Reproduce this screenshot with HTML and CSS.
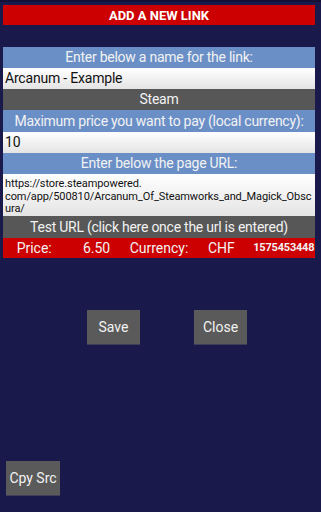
FILE: index.html
```html
<!DOCTYPE html>
<html>
<head>
<meta charset="utf-8">
<link rel="stylesheet" href="styles.css">
</head>
<body>
<div class="page">
  <div class="title">ADD A NEW LINK</div>
  <div class="form">
    <div class="label">Enter below a name for the link:</div>
    <div class="input">Arcanum - Example</div>
    <div class="gray">Steam</div>
    <div class="label tall">Maximum price you want to pay (local currency):</div>
    <div class="input">10</div>
    <div class="label">Enter below the page URL:</div>
    <div class="input url">https://store.steampowered.<br>com/app/500810/Arcanum_Of_Steamworks_and_Magick_Obsc<br>ura/</div>
    <div class="gray tall">Test URL (click here once the url is entered)</div>
    <div class="price">
      <span>Price:</span>
      <span>6.50</span>
      <span>Currency:</span>
      <span>CHF</span>
      <span class="stamp">1575453448</span>
    </div>
  </div>
  <div class="actions">
    <div class="btn">Save</div>
    <div class="btn">Close</div>
  </div>
  <div class="bottom">
    <div class="btn">Cpy Src</div>
  </div>
</div>
</body>
</html>
```

FILE: styles.css
```css
html, body {
  margin: 0;
  padding: 0;
  background: #19194b;
  font-family: Roboto, "Liberation Sans", sans-serif;
}
.page {
  width: 321px;
  height: 512px;
  box-sizing: border-box;
  padding: 3px 6px 0 3px;
  border-top: 2px solid #121238;
  display: flex;
  flex-direction: column;
}
.title {
  height: 20px;
  background: #cc0000;
  color: #fff;
  font-weight: bold;
  font-size: 13px;
  line-height: 21px;
  text-align: center;
}
.form {
  margin-top: 22px;
  display: flex;
  flex-direction: column;
}
.label {
  height: 21px;
  line-height: 21px;
  background: #6a8fc7;
  color: #f2f2f2;
  font-size: 14px;
  letter-spacing: -0.25px;
  text-align: center;
  white-space: nowrap;
}
.input {
  height: 21px;
  line-height: 21px;
  background: linear-gradient(#ffffff, #e4e4e4);
  color: #111;
  font-size: 14px;
  letter-spacing: -0.2px;
  padding-left: 2px;
  white-space: nowrap;
}
.input.url {
  height: 42px;
  font-size: 11px;
  letter-spacing: -0.1px;
  line-height: 12.5px;
  padding-top: 4px;
  box-sizing: border-box;
  overflow: hidden;
}
.gray {
  height: 21px;
  line-height: 21px;
  background: #575757;
  color: #f2f2f2;
  font-size: 14px;
  letter-spacing: -0.25px;
  text-align: center;
  white-space: nowrap;
}
.tall {
  height: 22px;
  line-height: 22px;
}
.price {
  height: 20px;
  line-height: 20px;
  background: #cc0000;
  color: #f2f2f2;
  font-size: 14px;
  display: grid;
  grid-template-columns: repeat(5, 1fr);
  text-align: center;
}
.price .stamp {
  font-size: 11px;
  font-weight: bold;
  letter-spacing: -0.2px;
  white-space: nowrap;
}
.actions {
  margin-top: 52px;
  padding-left: 84px;
  display: flex;
  gap: 54px;
}
.btn {
  width: 53px;
  height: 34px;
  line-height: 34px;
  background: #5a5a5a;
  color: #f2f2f2;
  font-size: 14px;
  text-align: center;
  box-shadow: 0 1px 0 #3e3e5a;
}
.bottom {
  margin-top: auto;
  margin-bottom: 17px;
  padding-left: 3px;
}
.bottom .btn {
  width: 54px;
}
```
